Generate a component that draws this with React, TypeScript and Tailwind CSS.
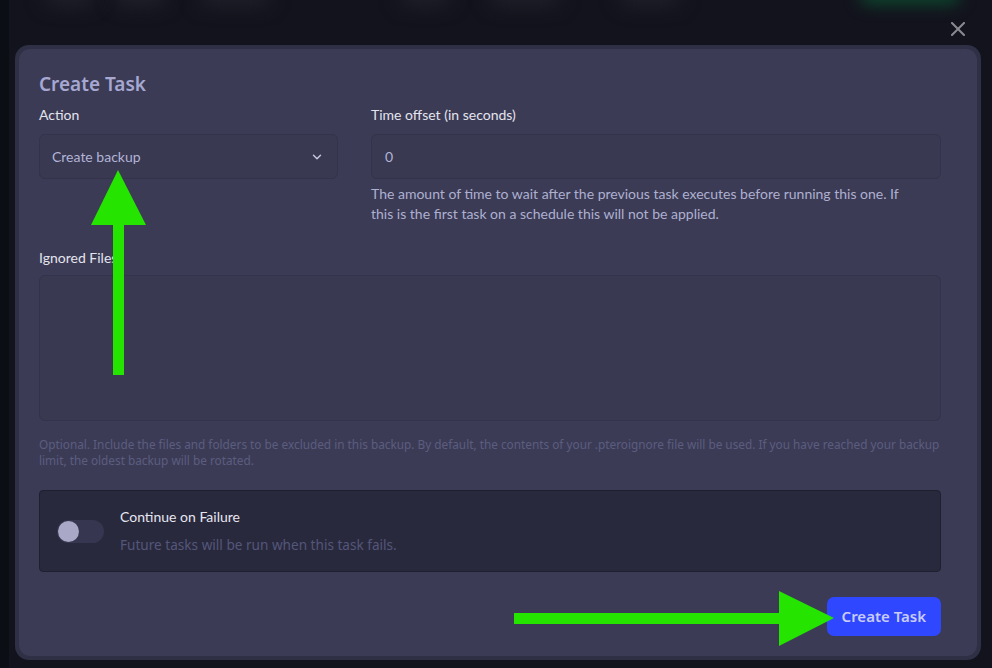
import { ChevronDown } from 'lucide-react';

const font = { fontFamily: '"Noto Sans", "Open Sans", sans-serif' };
const ui = { fontFamily: 'Lato, "Noto Sans", sans-serif' };

function Backdrop() {
  // blurred navigation bar behind the overlay
  return (
    <div className="absolute inset-x-0 top-0 h-[30px] overflow-hidden">
      <div className="absolute left-[45px] top-[-12px] h-[16px] w-[50px] rounded-full bg-[#23232e] blur-[10px]" />
      <div className="absolute left-[115px] top-[-12px] h-[16px] w-[50px] rounded-full bg-[#252530] blur-[10px]" />
      <div className="absolute left-[200px] top-[-12px] h-[16px] w-[70px] rounded-full bg-[#23232e] blur-[10px]" />
      <div className="absolute left-[400px] top-[-12px] h-[16px] w-[50px] rounded-full bg-[#23232e] blur-[10px]" />
      <div className="absolute left-[490px] top-[-12px] h-[16px] w-[70px] rounded-full bg-[#23232e] blur-[10px]" />
      <div className="absolute left-[620px] top-[-12px] h-[16px] w-[60px] rounded-full bg-[#23232e] blur-[10px]" />
      <div className="absolute left-[860px] top-[-12px] h-[16px] w-[100px] rounded-full bg-[#0c4a2e] blur-[8px]" />
    </div>
  );
}

function Toggle() {
  return (
    <div className="flex h-[23px] w-[47px] items-center rounded-full bg-[#363650] pl-[1px]">
      <div className="size-[21px] rounded-full bg-[#a9a8c6]" />
    </div>
  );
}

function Arrows() {
  return (
    <svg className="pointer-events-none absolute left-0 top-0" width="992" height="668">
      <polygon points="118,170 91,225 146,225" fill="#24e400" />
      <rect x="113" y="224" width="11" height="151" fill="#24e400" />
      <rect x="514" y="613" width="267" height="11" fill="#24e400" />
      <polygon points="779,591 779,646 834,618" fill="#24e400" />
    </svg>
  );
}

export default function App() {
  return (
    <div className="relative h-[668px] w-[992px] overflow-hidden bg-[#13131d]" style={font}>
      <div className="absolute inset-y-0 left-0 w-[9px] bg-[#0c0e16]" />
      <Backdrop />

      <div className="relative flex flex-col pl-[15px] pr-[11px] pt-[22px]">
        <div className="flex h-[14px] justify-end pr-[16px]">
          <svg width="14" height="14" viewBox="0 0 14 14">
            <path d="M1 1 L13 13 M13 1 L1 13" stroke="#8a8a92" strokeWidth="2" strokeLinecap="square" />
          </svg>
        </div>

        {/* Modal */}
        <div className="mt-[9px] rounded-[14px] bg-[#2f2f45] p-[4px]">
          <div className="rounded-[11px] bg-[#3b3b55] pb-[20px] pl-[20px] pr-[36px] pt-[22px]">
            <h2 className="text-[19px] font-semibold leading-[26px] text-[#a6a8d2]">Create Task</h2>

            <div className="mt-[8px] grid grid-cols-[299px_1fr] gap-x-[33px]" style={ui}>
              <div>
                <label className="block text-[14px] leading-[20px] text-[#e4e4ee]">Action</label>
                <div className="mt-[9px] flex h-[45px] items-center justify-between rounded-[6px] border border-[#33334b] bg-[#393952] pl-[12px] pr-[13px]">
                  <span className="text-[14px] text-[#b3b4d6]">Create backup</span>
                  <ChevronDown className="size-[14px] text-[#c6c7e0]" strokeWidth={2.5} />
                </div>
              </div>
              <div>
                <label className="block text-[14px] leading-[20px] text-[#e4e4ee]">Time offset (in seconds)</label>
                <div className="mt-[9px] flex h-[45px] items-center rounded-[6px] border border-[#33334b] bg-[#393952] pl-[13px]">
                  <span className="text-[14px] text-[#b3b4d6]">0</span>
                </div>
                <p className="mt-[5px] max-w-[535px] text-[14px] leading-[20px] text-[#aeb0d0]">
                  The amount of time to wait after the previous task executes before running this one. If this is the
                  first task on a schedule this will not be applied.
                </p>
              </div>
            </div>

            <div className="mt-[24px]">
              <label className="block text-[14px] leading-[20px] text-[#e4e4ee]" style={ui}>
                Ignored Files
              </label>
              <div className="mt-[7px] h-[146px] rounded-[6px] border border-[#33334b] bg-[#393952]" />
              <p className="mt-[15px] text-[11.8px] leading-[16px] text-[#5b5d80]">
                Optional. Include the files and folders to be excluded in this backup. By default, the contents of your
                .pteroignore file will be used. If you have reached your backup limit, the oldest backup will be rotated.
              </p>
            </div>

            <div className="mt-[22px] flex h-[82px] items-center gap-[16px] rounded-[4px] border border-[#1f1f2f] bg-[#29293d] pl-[17px]">
              <Toggle />
              <div className="flex flex-col">
                <span className="text-[14px] leading-[20px] text-[#e6e6f0]" style={ui}>
                  Continue on Failure
                </span>
                <span className="mt-[8px] text-[13.6px] leading-[20px] text-[#54567a]">
                  Future tasks will be run when this task fails.
                </span>
              </div>
            </div>

            <div className="mt-[25px] flex justify-end">
              <button className="h-[39px] rounded-[7px] bg-[#2f48ff] px-[15px] text-[15px] font-semibold text-[#c9ccf6]">
                Create Task
              </button>
            </div>
          </div>
        </div>
      </div>

      <Arrows />
    </div>
  );
}
